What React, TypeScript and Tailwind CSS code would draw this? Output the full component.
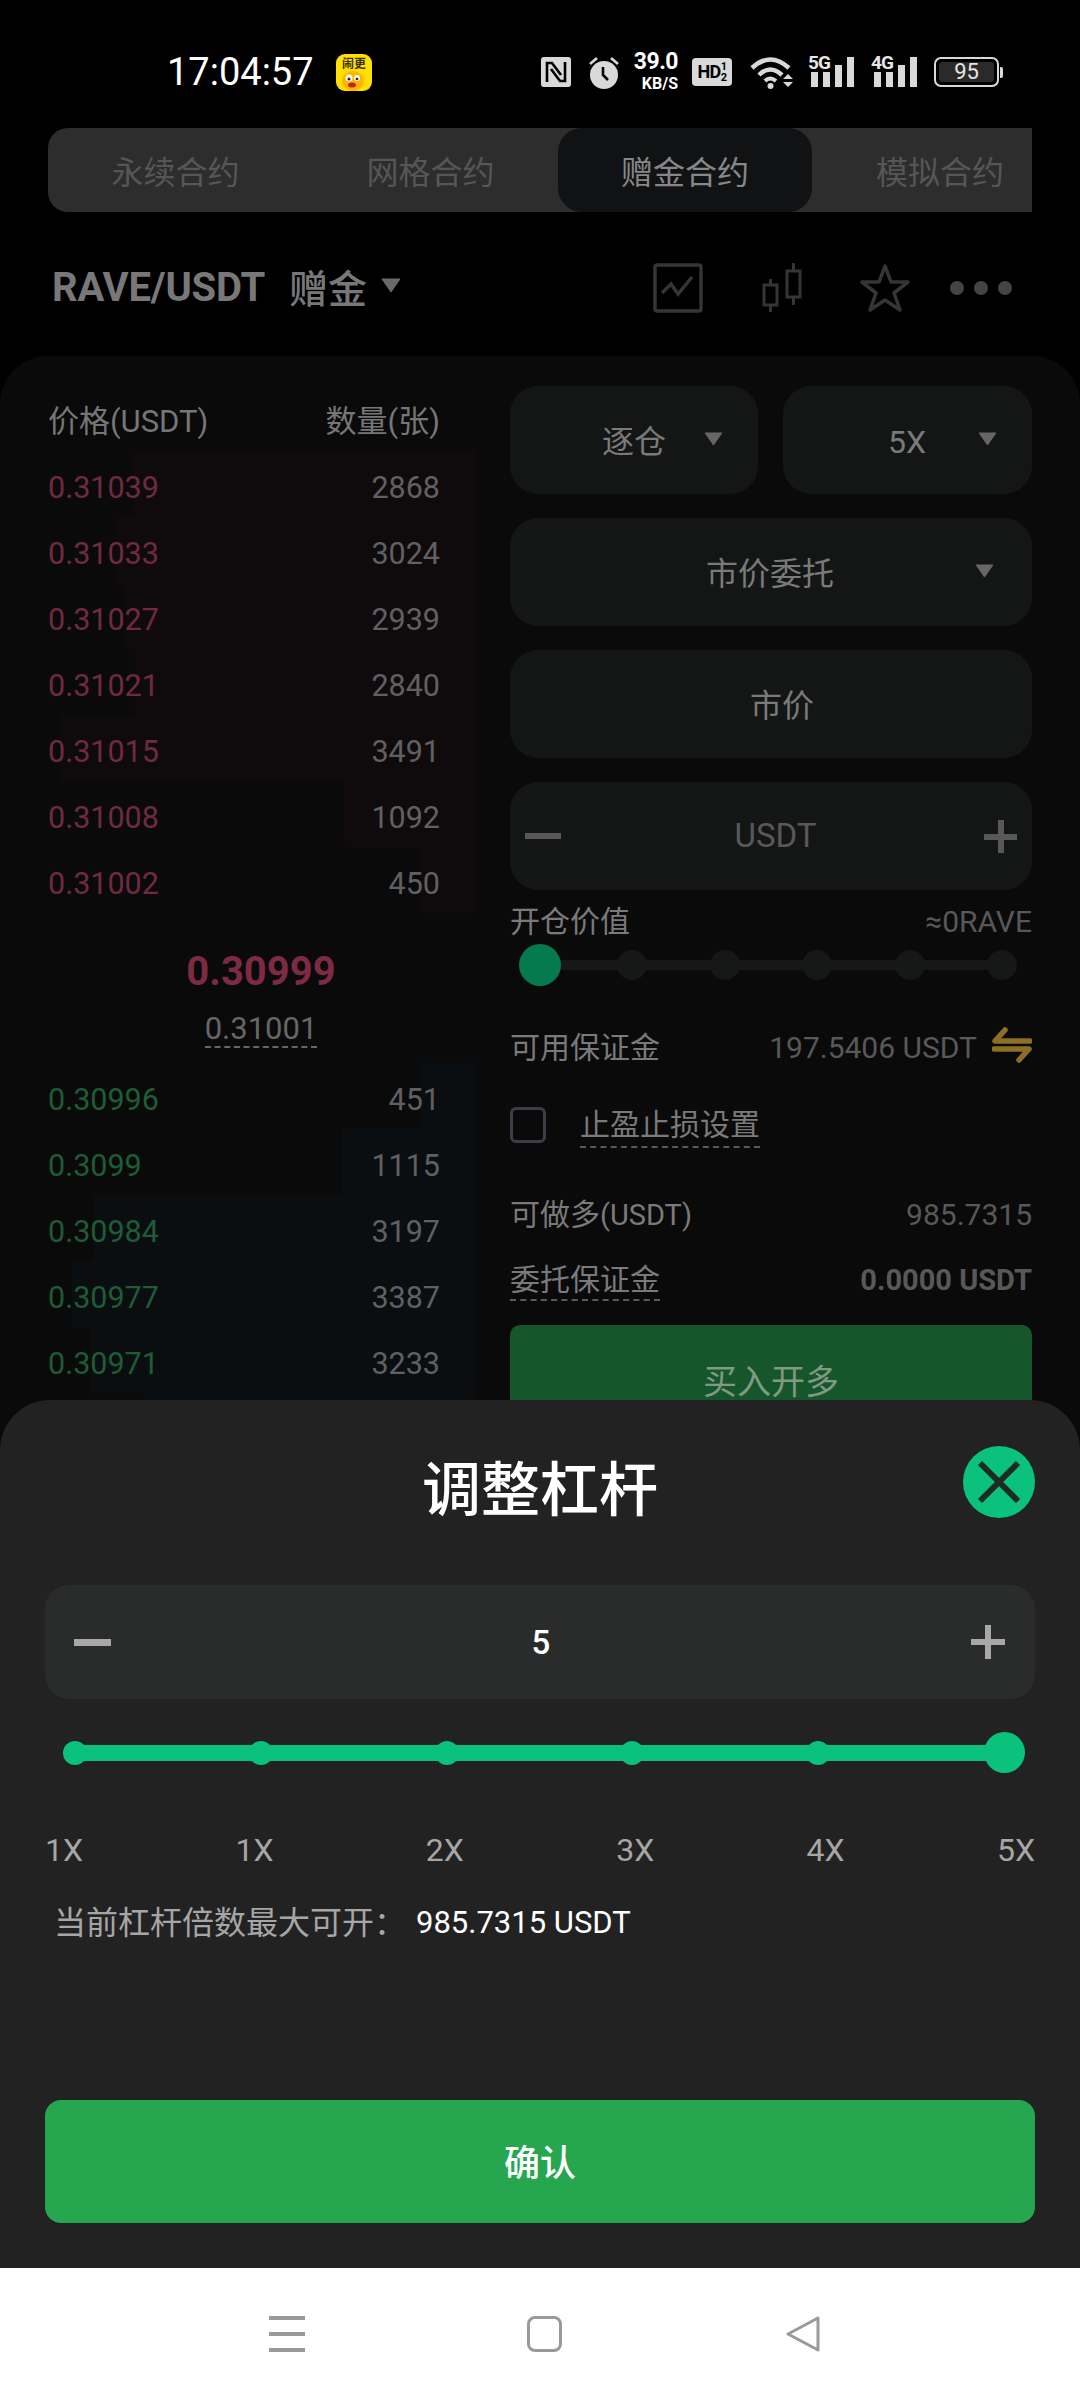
import React from "react";

const FONT = "[font-family:Roboto,'Noto_Sans_CJK_SC',sans-serif]";

const asks = [
  { p: "0.31039", q: "2868", left: 134 },
  { p: "0.31033", q: "3024", left: 115 },
  { p: "0.31027", q: "2939", left: 126 },
  { p: "0.31021", q: "2840", left: 135 },
  { p: "0.31015", q: "3491", left: 60 },
  { p: "0.31008", q: "1092", left: 345 },
  { p: "0.31002", q: "450", left: 420 },
];
const bids = [
  { p: "0.30996", q: "451", left: 420 },
  { p: "0.3099", q: "1115", left: 342 },
  { p: "0.30984", q: "3197", left: 93 },
  { p: "0.30977", q: "3387", left: 72 },
  { p: "0.30971", q: "3233", left: 90 },
  { p: "0.30965", q: "2760", left: 143 },
];

function Row({ p, q, left, side }: { p: string; q: string; left: number; side: "ask" | "bid" }) {
  return (
    <div className="relative h-[66px] w-[476px] flex items-center justify-between pt-[7px] pl-[48px] pr-[36px] text-[30.5px] leading-[40px]">
      <div
        className={side === "ask" ? "absolute top-0 bottom-0 right-0 bg-[#0f0b0d]" : "absolute top-0 bottom-0 right-0 bg-[#0a0e10]"}
        style={{ left }}
      />
      <span className={side === "ask" ? "relative text-[#702a40]" : "relative text-[#1e5c35]"}>{p}</span>
      <span className="relative text-[#606060]">{q}</span>
    </div>
  );
}

function Tri({ className }: { className: string }) {
  return (
    <svg viewBox="0 0 20 15" className={className}>
      <path d="M1 1 H19 L10 14 Z" fill="currentColor" stroke="currentColor" strokeWidth="1" strokeLinejoin="round" />
    </svg>
  );
}

function Card({ children, className }: { children: React.ReactNode; className: string }) {
  return <div className={"h-[108px] rounded-[28px] bg-[#141616] flex items-center " + className}>{children}</div>;
}

function StatusIcons() {
  return (
    <div className="flex items-center h-[36px] text-[#dcdcdc]">
      <svg viewBox="0 0 30 30" className="w-[30px] h-[30px]">
        <rect width="30" height="30" rx="3" fill="#d9d9d9" />
        <path d="M6 25 V6 H11 L20 18 M24 5 V24 H19 L10 12" fill="none" stroke="#000" strokeWidth="2.6" />
      </svg>
      <svg viewBox="0 0 32 34" className="w-[32px] h-[34px] ml-[17px]">
        <circle cx="16" cy="20" r="14" fill="#d9d9d9" />
        <path d="M15 12 V20 L20 25" fill="none" stroke="#000" strokeWidth="2.6" />
        <path d="M2 9 L9 3 M30 9 L23 3" stroke="#d9d9d9" strokeWidth="2.6" />
      </svg>
      <div className="ml-[11px] w-[47px] mb-[2px] flex flex-col items-end font-bold text-white">
        <span className="text-[23px] leading-[24px] tracking-[-0.5px]">39.0</span>
        <span className="mt-[1px] text-[16px] leading-[18px]">KB/S</span>
      </div>
      <div className="ml-[14px] w-[40px] h-[28px] rounded-[4px] bg-[#d9d9d9] flex items-center justify-center text-black font-bold text-[18px] leading-none tracking-[-0.5px]">
        HD<span className="text-[11px] leading-[11px] text-center flex flex-col"><span>1</span><span>2</span></span>
      </div>
      <svg viewBox="0 0 45 34" className="w-[45px] h-[34px] ml-[18px]">
        <path d="M2 13 Q20 -4 39 13" fill="none" stroke="#d9d9d9" strokeWidth="4.5" />
        <path d="M9 20 Q20 9 32 20" fill="none" stroke="#d9d9d9" strokeWidth="4.5" />
        <path d="M15 26 Q20 21 26 26" fill="none" stroke="#d9d9d9" strokeWidth="4" />
        <circle cx="20.5" cy="31" r="3" fill="#d9d9d9" />
        <path d="M33 24 L38 19 L43 24 Z M33 27 L43 27 L38 32 Z" fill="#d9d9d9" />
      </svg>
      <Signal label="5G" className="ml-[13px]" />
      <Signal label="4G" className="ml-[17px]" />
      <div className="ml-[17px] flex items-center">
        <div className="w-[65px] h-[30px] rounded-[7px] border-[2px] border-[#d9d9d9] p-[3px]">
          <div className="w-full h-full rounded-[3px] bg-[#2a2a2a] flex items-center justify-center text-[22px] leading-none text-[#e5e5e5]">95</div>
        </div>
        <div className="w-[3px] h-[11px] bg-[#d9d9d9] ml-[1px] rounded-r-[2px]" />
      </div>
    </div>
  );
}

function Signal({ label, className }: { label: string; className: string }) {
  return (
    <div className={"relative w-[46px] h-[30px] " + className}>
      <span className="absolute left-0 -top-[2px] text-[19px] leading-[16px] font-bold text-[#e5e5e5] tracking-[-1px]">{label}</span>
      <div className="absolute inset-0 flex items-end justify-end gap-[5px]">
        <div className="w-[7px] h-[15px] bg-[#d9d9d9]" />
        <div className="w-[7px] h-[15px] bg-[#d9d9d9]" />
        <div className="w-[7px] h-[22px] bg-[#d9d9d9]" />
        <div className="w-[7px] h-[30px] bg-[#d9d9d9]" />
      </div>
    </div>
  );
}

function Market() {
  return (
    <div className="relative flex-1 overflow-hidden">
      <div className="h-[128px] pt-[16px] pl-[167px] pr-[77px] flex items-center">
        <span className="text-[38px] leading-[40px] text-white w-[169px]">17:04:57</span>
        <svg viewBox="0 0 36 37" className="w-[36px] h-[37px] mt-[1px]">
          <rect width="36" height="37" rx="9" fill="#ffe000" />
          <text x="18" y="14" fontSize="12" fontWeight="700" textAnchor="middle" fill="#3a3000" fontFamily="'Noto Sans CJK SC'">闹更</text>
          <ellipse cx="17" cy="27" rx="11" ry="10" fill="#ffb400" />
          <circle cx="13" cy="24" r="3.5" fill="#fff" />
          <circle cx="21" cy="24" r="3" fill="#fff" />
          <circle cx="13" cy="25" r="1.5" fill="#222" />
          <circle cx="21" cy="25" r="1.3" fill="#222" />
          <ellipse cx="16" cy="31" rx="4" ry="2.5" fill="#c2231e" />
        </svg>
        <div className="ml-auto"><StatusIcons /></div>
      </div>
      <div className="ml-[48px] w-[984px] h-[84px] rounded-l-[20px] bg-[#2d2d2d] flex items-center text-[32px] leading-[40px] text-[#565656]">
        <div className="w-[255px] text-center pt-[6px]">永续合约</div>
        <div className="w-[255px] text-center pt-[6px]">网格合约</div>
        <div className="w-[254px] h-full pt-[6px] rounded-[24px] bg-[#111214] text-[#878787] flex items-center justify-center">赠金合约</div>
        <div className="w-[220px] text-center pl-[36px] pt-[6px]">模拟合约</div>
      </div>
      <div className="h-[144px] pt-[8px] flex items-center pl-[52px] pr-[68px]">
        <span className="text-[40px] leading-[44px] font-bold text-[#787878] tracking-[-0.2px]">RAVE/USDT</span>
        <span className="ml-[24px] pt-[4px] text-[39px] leading-[44px] font-medium text-[#787878]">赠金</span>
        <Tri className="ml-[14px] mb-[6px] w-[20px] h-[15px] text-[#6a6a6a]" />
        <div className="ml-auto flex items-center">
          <svg viewBox="0 0 50 50" className="w-[50px] h-[50px]">
            <rect x="2" y="2" width="46" height="46" rx="2" fill="none" stroke="#353535" strokeWidth="3.5" />
            <path d="M9 30 L18 21 L25 31 L39 14" fill="none" stroke="#353535" strokeWidth="3.5" />
          </svg>
          <svg viewBox="0 0 40 50" className="w-[40px] h-[50px] ml-[59px]">
            <rect x="2" y="22" width="13" height="20" fill="none" stroke="#353535" strokeWidth="3" />
            <path d="M8.5 16 V22 M8.5 42 V49" stroke="#353535" strokeWidth="3" />
            <rect x="25" y="8" width="13" height="26" fill="none" stroke="#353535" strokeWidth="3" />
            <path d="M31.5 0 V8 M31.5 34 V42" stroke="#353535" strokeWidth="3" />
          </svg>
          <svg viewBox="0 0 50 50" className="w-[50px] h-[50px] ml-[58px]">
            <path d="M25 3 L31 19 L48 19 L34 30 L40 47 L25 37 L10 47 L16 30 L2 19 L19 19 Z" fill="none" stroke="#353535" strokeWidth="3.5" strokeLinejoin="round" />
          </svg>
          <div className="ml-[40px] w-[62px] flex justify-between">
            <div className="w-[14px] h-[14px] rounded-full bg-[#444444]" />
            <div className="w-[14px] h-[14px] rounded-full bg-[#444444]" />
            <div className="w-[14px] h-[14px] rounded-full bg-[#444444]" />
          </div>
        </div>
      </div>
      <div className="h-[1200px] rounded-t-[48px] bg-[#0a0a0b] flex">
        <div className="w-[476px]">
          <div className="h-[95px] pt-[46px] pl-[48px] pr-[36px] flex justify-between text-[31px] leading-[40px] text-[#767676]">
            <span>价格(USDT)</span>
            <span>数量(张)</span>
          </div>
          {asks.map((r) => <Row key={r.p} {...r} side="ask" />)}
          <div className="h-[150px] flex flex-col items-center pt-[34px] pl-[46px]">
            <div className="h-[50px] leading-[50px] text-[40px] font-bold text-[#7d2a44]">0.30999</div>
            <div className="mt-[14px] h-[37px] leading-[36px] text-[31px] text-[#666] border-b-[2px] border-dashed border-[#666]">0.31001</div>
          </div>
          {bids.map((r) => <Row key={r.p} {...r} side="bid" />)}
        </div>
        <div className="ml-[34px] w-[522px] pt-[30px] text-[30px] leading-[40px] text-[#7a7a7a]">
          <div className="flex gap-[25px] text-[32px]">
            <Card className="w-[248px] pl-[92px]">
              <span className="mt-[4px]">逐仓</span>
              <Tri className="ml-[38px] mb-[2px] w-[19px] h-[14px] text-[#666]" />
            </Card>
            <Card className="w-[249px] pl-[105px]">
              <span className="mt-[4px]">5X</span>
              <Tri className="ml-[52px] mb-[2px] w-[19px] h-[14px] text-[#666]" />
            </Card>
          </div>
          <Card className="mt-[24px] w-full pl-[196px] text-[32px]">
            <span className="mt-[4px]">市价委托</span>
            <Tri className="ml-[141px] mb-[2px] w-[19px] h-[14px] text-[#666]" />
          </Card>
          <Card className="mt-[24px] w-full justify-center pl-[22px] text-[32px]">
            <span className="mt-[4px]">市价</span>
          </Card>
          <Card className="mt-[24px] w-full justify-between pl-[15px] pr-[15px] text-[#585858]">
            <div className="w-[36px] h-[6px] bg-[#585858]" />
            <span className="ml-[6px] text-[33px]">USDT</span>
            <div className="relative w-[33px] h-[33px]">
              <div className="absolute left-0 right-0 top-[14px] h-[6px] bg-[#585858]" />
              <div className="absolute top-0 bottom-0 left-[14px] w-[6px] bg-[#585858]" />
            </div>
          </Card>
          <div className="mt-[12px] h-[40px] flex justify-between">
            <span>开仓价值</span>
            <span className="text-[#585858]">≈0RAVE</span>
          </div>
          <div className="relative mt-[2px] h-[42px] ml-[9px] w-[504px] flex justify-between items-center">
            <div className="absolute left-[21px] right-[21px] top-[16px] h-[10px] bg-[#161818]" />
            <div className="relative w-[42px] h-[42px] rounded-full bg-[#067a4f]" />
            {[0, 1, 2, 3, 4].map((i) => (
              <div key={i} className="relative w-[42px] flex justify-center">
                <div className="w-[30px] h-[30px] rounded-full bg-[#161818]" />
              </div>
            ))}
          </div>
          <div className="mt-[42px] h-[40px] flex items-center">
            <span>可用保证金</span>
            <span className="ml-auto text-[#585858]">197.5406 USDT</span>
            <svg viewBox="0 0 40 36" className="ml-[15px] mb-[6px] w-[40px] h-[36px]">
              <path d="M13 3 L3 14 H38 M27 33 L37 22 H2" fill="none" stroke="#8c6f25" strokeWidth="5.5" strokeLinecap="round" strokeLinejoin="round" />
            </svg>
          </div>
          <div className="mt-[37px] h-[40px] flex items-center">
            <div className="w-[36px] h-[36px] rounded-[6px] border-[3px] border-[#3b3d47]" />
            <span className="ml-[34px] mt-[3px] h-[43px] border-b-[2px] border-dashed border-[#5a5a5a]">止盈止损设置</span>
          </div>
          <div className="mt-[50px] h-[40px] flex justify-between">
            <span>可做多<span className="text-[29px]">(USDT)</span></span>
            <span className="text-[#585858]">985.7315</span>
          </div>
          <div className="mt-[25px] h-[41px] flex justify-between">
            <span className="h-[41px] border-b-[2px] border-dashed border-[#5a5a5a]">委托保证金</span>
            <span className="text-[#585858] text-[29px] font-bold">0.0000 USDT</span>
          </div>
          <div className="mt-[24px] h-[108px] pt-[6px] rounded-[10px] bg-[#16562b] flex items-center justify-center text-[34px] text-[#7f9985]">买入开多</div>
        </div>
      </div>
      <div className="absolute left-0 right-0 bottom-0 h-[868px] rounded-t-[50px] bg-[#222222] pt-[46px] px-[45px]">
        <div className="relative h-[84px] flex items-center justify-center">
          <span className="mt-[6px] text-[59px] leading-[70px] font-medium text-white">调整杠杆</span>
          <div className="absolute right-0 top-0 w-[72px] h-[72px] rounded-full bg-[#0bc27c] flex items-center justify-center">
            <svg viewBox="0 0 44 44" className="w-[44px] h-[44px]">
              <path d="M3 3 L41 41 M41 3 L3 41" stroke="#1e2a24" strokeWidth="6" />
            </svg>
          </div>
        </div>
        <div className="mt-[55px] h-[114px] rounded-[24px] bg-[#2a2c2b] flex items-center justify-between pl-[29px] pr-[30px]">
          <div className="w-[37px] h-[7px] bg-[#a8a8a8]" />
          <span className="mt-[2px] text-[33px] leading-[40px] font-medium text-white">5</span>
          <div className="relative w-[34px] h-[34px]">
            <div className="absolute left-0 right-0 top-[14px] h-[6px] bg-[#a8a8a8]" />
            <div className="absolute top-0 bottom-0 left-[14px] w-[6px] bg-[#a8a8a8]" />
          </div>
        </div>
        <div className="relative mt-[33px] h-[41px] mx-[10px] flex justify-between items-center">
          <div className="absolute left-[20px] right-[20px] top-[13px] h-[16px] bg-[#0bc27c]" />
          {[0, 1, 2, 3, 4].map((i) => (
            <div key={i} className="relative w-[40px] flex justify-center">
              <div className="w-[24px] h-[24px] rounded-full bg-[#0bc27c]" />
            </div>
          ))}
          <div className="relative w-[41px] h-[41px] rounded-full bg-[#0bc27c]" />
        </div>
        <div className="mt-[57px] h-[40px] flex justify-between text-[32px] leading-[40px] text-[#a6a6a6]">
          {["1X", "1X", "2X", "3X", "4X", "5X"].map((t, i) => <span key={i}>{t}</span>)}
        </div>
        <div className="mt-[33px] h-[40px] pl-[9px] flex text-[32px] leading-[40px]">
          <span className="w-[362px] text-[#a6a6a6]">当前杠杆倍数最大可开：</span>
          <span className="text-white text-[31px]">985.7315 USDT</span>
        </div>
        <div className="mt-[157px] h-[123px] pt-[5px] rounded-[16px] bg-[#27a650] flex items-center justify-center text-[36px] font-medium text-white">确认</div>
      </div>
    </div>
  );
}

export default function App() {
  return (
    <div className={"w-[1080px] h-[2400px] bg-black flex flex-col overflow-hidden " + FONT}>
      <Market />
      <div className="h-[132px] pl-[9px] bg-white flex items-center justify-center">
        <div className="w-[36px] h-[36px] flex flex-col justify-between mr-[222px]">
          <div className="h-[4px] bg-[#9a9a9a]" />
          <div className="h-[4px] bg-[#9a9a9a]" />
          <div className="h-[4px] bg-[#9a9a9a]" />
        </div>
        <div className="w-[35px] h-[36px] rounded-[8px] border-[3px] border-[#9a9a9a] mr-[223px]" />
        <svg viewBox="0 0 36 36" className="w-[36px] h-[36px]">
          <path d="M33 2 L3 18 L33 34 Z" fill="none" stroke="#9a9a9a" strokeWidth="3" strokeLinejoin="round" />
        </svg>
      </div>
    </div>
  );
}
